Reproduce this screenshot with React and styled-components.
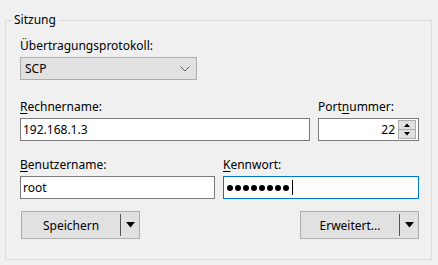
import React from 'react';
import styled, { createGlobalStyle } from 'styled-components';

const Global = createGlobalStyle`
  html, body {
    margin: 0;
    padding: 0;
    background: #f0f0f0;
  }
  body {
    font-family: 'Noto Sans', 'Liberation Sans', sans-serif;
    font-size: 12px;
    color: #000;
  }
`;

const Page = styled.div`
  width: 438px;
  height: 265px;
  padding: 12px 0 0 5px;
  box-sizing: border-box;
`;

const Group = styled.fieldset`
  width: 427px;
  height: 248px;
  box-sizing: border-box;
  margin: 0;
  border: 1px solid #dcdcdc;
  padding: 0 11px 0 14px;
`;

const Legend = styled.legend`
  margin-left: -8px;
  padding: 0 2px;
  line-height: 16px;
`;

const Label = styled.div`
  line-height: 15px;
  height: 15px;
  margin: ${p => p.$top || 0}px 0 4px 0;
  white-space: nowrap;
`;

const Key = styled.span`
  text-decoration: underline;
  text-underline-offset: 2px;
`;

const Combo = styled.div`
  width: 177px;
  height: 23px;
  box-sizing: border-box;
  border: 1px solid #adadad;
  background: #e1e1e1;
  display: flex;
  align-items: center;
  justify-content: space-between;
  padding: 0 6px 0 4px;
`;

const Row = styled.div`
  display: grid;
  grid-template-columns: ${p => p.$cols};
  column-gap: ${p => p.$gap}px;
`;

const Field = styled.div`
  display: flex;
  flex-direction: column;
`;

const Input = styled.div`
  height: 23px;
  box-sizing: border-box;
  border: 1px solid ${p => (p.$focus ? '#0078d7' : '#7a7a7a')};
  background: #fff;
  display: flex;
  align-items: center;
  justify-content: ${p => (p.$right ? 'flex-end' : 'flex-start')};
  padding: 0 2px 0 2px;
  gap: 2px;
`;

const Spin = styled.div`
  display: flex;
  flex-direction: column;
  width: 18px;
  height: 19px;
  margin-left: 1px;
`;

const SpinBtn = styled.div`
  flex: 1;
  background: #e1e1e1;
  border: 1px solid #adadad;
  display: flex;
  align-items: center;
  justify-content: center;
  & + & {
    border-top: none;
  }
`;

const Dots = styled.div`
  display: flex;
  align-items: center;
  gap: 2px;
  padding-left: 1px;
`;

const Dot = styled.span`
  width: 6px;
  height: 6px;
  border-radius: 50%;
  background: #000;
`;

const Caret = styled.span`
  width: 1px;
  height: 15px;
  background: #000;
  margin-left: 1px;
`;

const Buttons = styled.div`
  display: flex;
  justify-content: space-between;
  margin-top: 12px;
  padding: 0 1px;
`;

const SplitButton = styled.div`
  width: 119px;
  height: 28px;
  box-sizing: border-box;
  border: 1px solid #adadad;
  background: #e1e1e1;
  display: flex;
  align-items: center;
`;

const ButtonText = styled.span`
  flex: 1;
  text-align: center;
`;

const Divider = styled.span`
  width: 1px;
  height: 22px;
  background: #555;
`;

const Arrow = styled.span`
  width: 18px;
  display: flex;
  justify-content: center;
`;

const Chevron = () => (
  <svg width="10" height="6" viewBox="0 0 10 6">
    <path d="M0.5 0.5 L5 5 L9.5 0.5" fill="none" stroke="#606060" strokeWidth="1" />
  </svg>
);

const Tri = ({ up, size = 7 }) => (
  <svg width={size + 2} height={Math.ceil(size / 2) + 1} viewBox={`0 0 ${size + 2} ${Math.ceil(size / 2) + 1}`}>
    {up ? (
      <path d={`M1 ${Math.ceil(size / 2) + 1} L${(size + 2) / 2} 0.5 L${size + 1} ${Math.ceil(size / 2) + 1}Z`} fill="#000" />
    ) : (
      <path d={`M1 0 L${size + 1} 0 L${(size + 2) / 2} ${Math.ceil(size / 2) + 0.5}Z`} fill="#000" />
    )}
  </svg>
);

export default function App() {
  return (
    <Page>
      <Global />
      <Group>
        <Legend>Sitzung</Legend>
        <Label $top={10}>Übertragungsprotokoll:</Label>
        <Combo>
          <span>SCP</span>
          <Chevron />
        </Combo>

        <Row $cols="290px 101px" $gap={8}>
          <Field>
            <Label $top={19}><Key>R</Key>echnername:</Label>
            <Input>192.168.1.3</Input>
          </Field>
          <Field>
            <Label $top={19}>Port<Key>n</Key>ummer:</Label>
            <Input $right>
              22
              <Spin>
                <SpinBtn><Tri up size={6} /></SpinBtn>
                <SpinBtn><Tri size={6} /></SpinBtn>
              </Spin>
            </Input>
          </Field>
        </Row>

        <Row $cols="195px 196px" $gap={8}>
          <Field>
            <Label $top={16}><Key>B</Key>enutzername:</Label>
            <Input>root</Input>
          </Field>
          <Field>
            <Label $top={16}><Key>K</Key>ennwort:</Label>
            <Input $focus>
              <Dots>
                {Array.from({ length: 8 }).map((_, i) => (
                  <Dot key={i} />
                ))}
              </Dots>
              <Caret />
            </Input>
          </Field>
        </Row>

        <Buttons>
          <SplitButton>
            <ButtonText>Speichern</ButtonText>
            <Divider />
            <Arrow><Tri size={9} /></Arrow>
          </SplitButton>
          <SplitButton>
            <ButtonText>Erweitert...</ButtonText>
            <Divider />
            <Arrow><Tri size={9} /></Arrow>
          </SplitButton>
        </Buttons>
      </Group>
    </Page>
  );
}
